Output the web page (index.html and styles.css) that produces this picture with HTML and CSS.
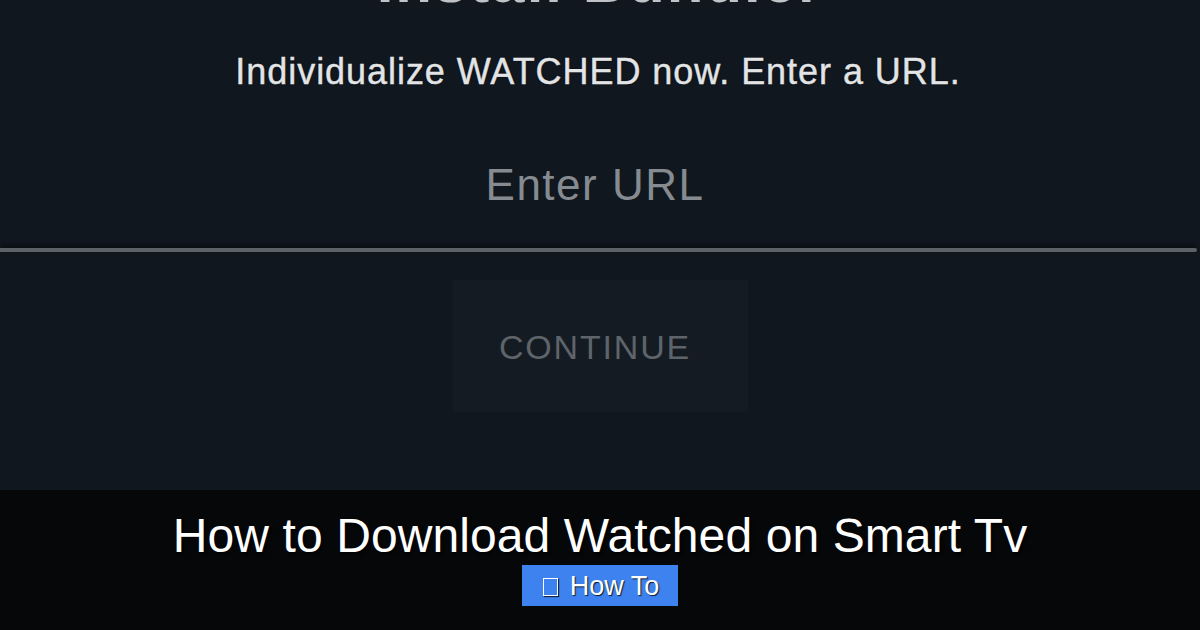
FILE: index.html
```html
<!DOCTYPE html>
<html lang="en">
<head>
<meta charset="utf-8">
<title>How to Download Watched on Smart Tv</title>
<link rel="stylesheet" href="styles.css">
</head>
<body>
<div class="page">
  <main class="screen">
    <h2 class="screen-title">Install Bundler</h2>
    <p class="screen-sub">Individualize WATCHED now. Enter a URL.</p>
    <div class="url-field">Enter URL</div>
    <div class="url-line"></div>
    <div class="continue-btn"><span class="continue-text">CONTINUE</span></div>
  </main>
  <footer class="caption">
    <h1 class="caption-title">How to Download Watched on Smart Tv</h1>
    <div class="badge"><span class="badge-icon"></span><span class="badge-text">How To</span></div>
  </footer>
</div>
</body>
</html>
```
FILE: styles.css
```css
* { box-sizing: border-box; }
html, body {
  margin: 0;
  padding: 0;
  width: 1200px;
  height: 630px;
  overflow: hidden;
  background: #10171e;
  font-family: "Liberation Sans", Arial, sans-serif;
}
.page {
  width: 1200px;
  height: 630px;
  display: flex;
  flex-direction: column;
}
.screen {
  height: 490px;
  display: flex;
  flex-direction: column;
  align-items: center;
  background: #10171e;
  overflow: hidden;
}
.screen-title {
  margin: -48px 0 0;
  font-size: 60px;
  line-height: 60px;
  font-weight: 700;
  letter-spacing: 2px;
  color: #bfc3c7;
}
.screen-sub {
  margin: 42px 0 0;
  padding-right: 4px;
  font-size: 36px;
  line-height: 36px;
  letter-spacing: 0.95px;
  color: #e2e4e6;
  -webkit-text-stroke: 0.4px #e2e4e6;
  text-shadow: 0 0 2px rgba(0,0,0,.6);
}
.url-field {
  margin-top: 73px;
  margin-right: 10px;
  font-size: 44px;
  line-height: 44px;
  letter-spacing: 1.5px;
  color: #858b91;
}
.url-line {
  align-self: flex-start;
  margin-top: 41px;
  width: 1197px;
  height: 4px;
  border-radius: 0 2px 2px 0;
  background: #5c6267;
  box-shadow: 0 -3px 4px rgba(0,0,0,.45);
}
.continue-btn {
  margin-top: 28px;
  width: 295px;
  height: 132px;
  display: flex;
  align-items: center;
  justify-content: center;
  padding: 2px 10px 0 0;
  background: #141b23;
  font-size: 34px;
  letter-spacing: 1.8px;
  color: #5e646a;
}
.caption {
  height: 140px;
  background: #050709;
  display: flex;
  flex-direction: column;
  align-items: center;
  padding-top: 22px;
}
.caption-title {
  margin: 0;
  font-size: 48px;
  line-height: 48px;
  font-weight: 400;
  letter-spacing: 0.1px;
  color: #ffffff;
  text-shadow: 2px 2px 3px rgba(0,0,0,.7);
}
.badge {
  margin-top: 5px;
  height: 41px;
  display: flex;
  align-items: center;
  gap: 12px;
  padding: 2px 19px 0 21px;
  background: #3d82ee;
  color: #ffffff;
  font-size: 27px;
  text-shadow: 1px 1px 1px rgba(0,0,0,.8);
}
.badge-icon {
  width: 15px;
  height: 18px;
  border: 1.5px solid #ffffff;
  box-shadow: 1px 1px 1px rgba(0,0,0,.7);
}
.badge-text {
  line-height: 27px;
}
```
